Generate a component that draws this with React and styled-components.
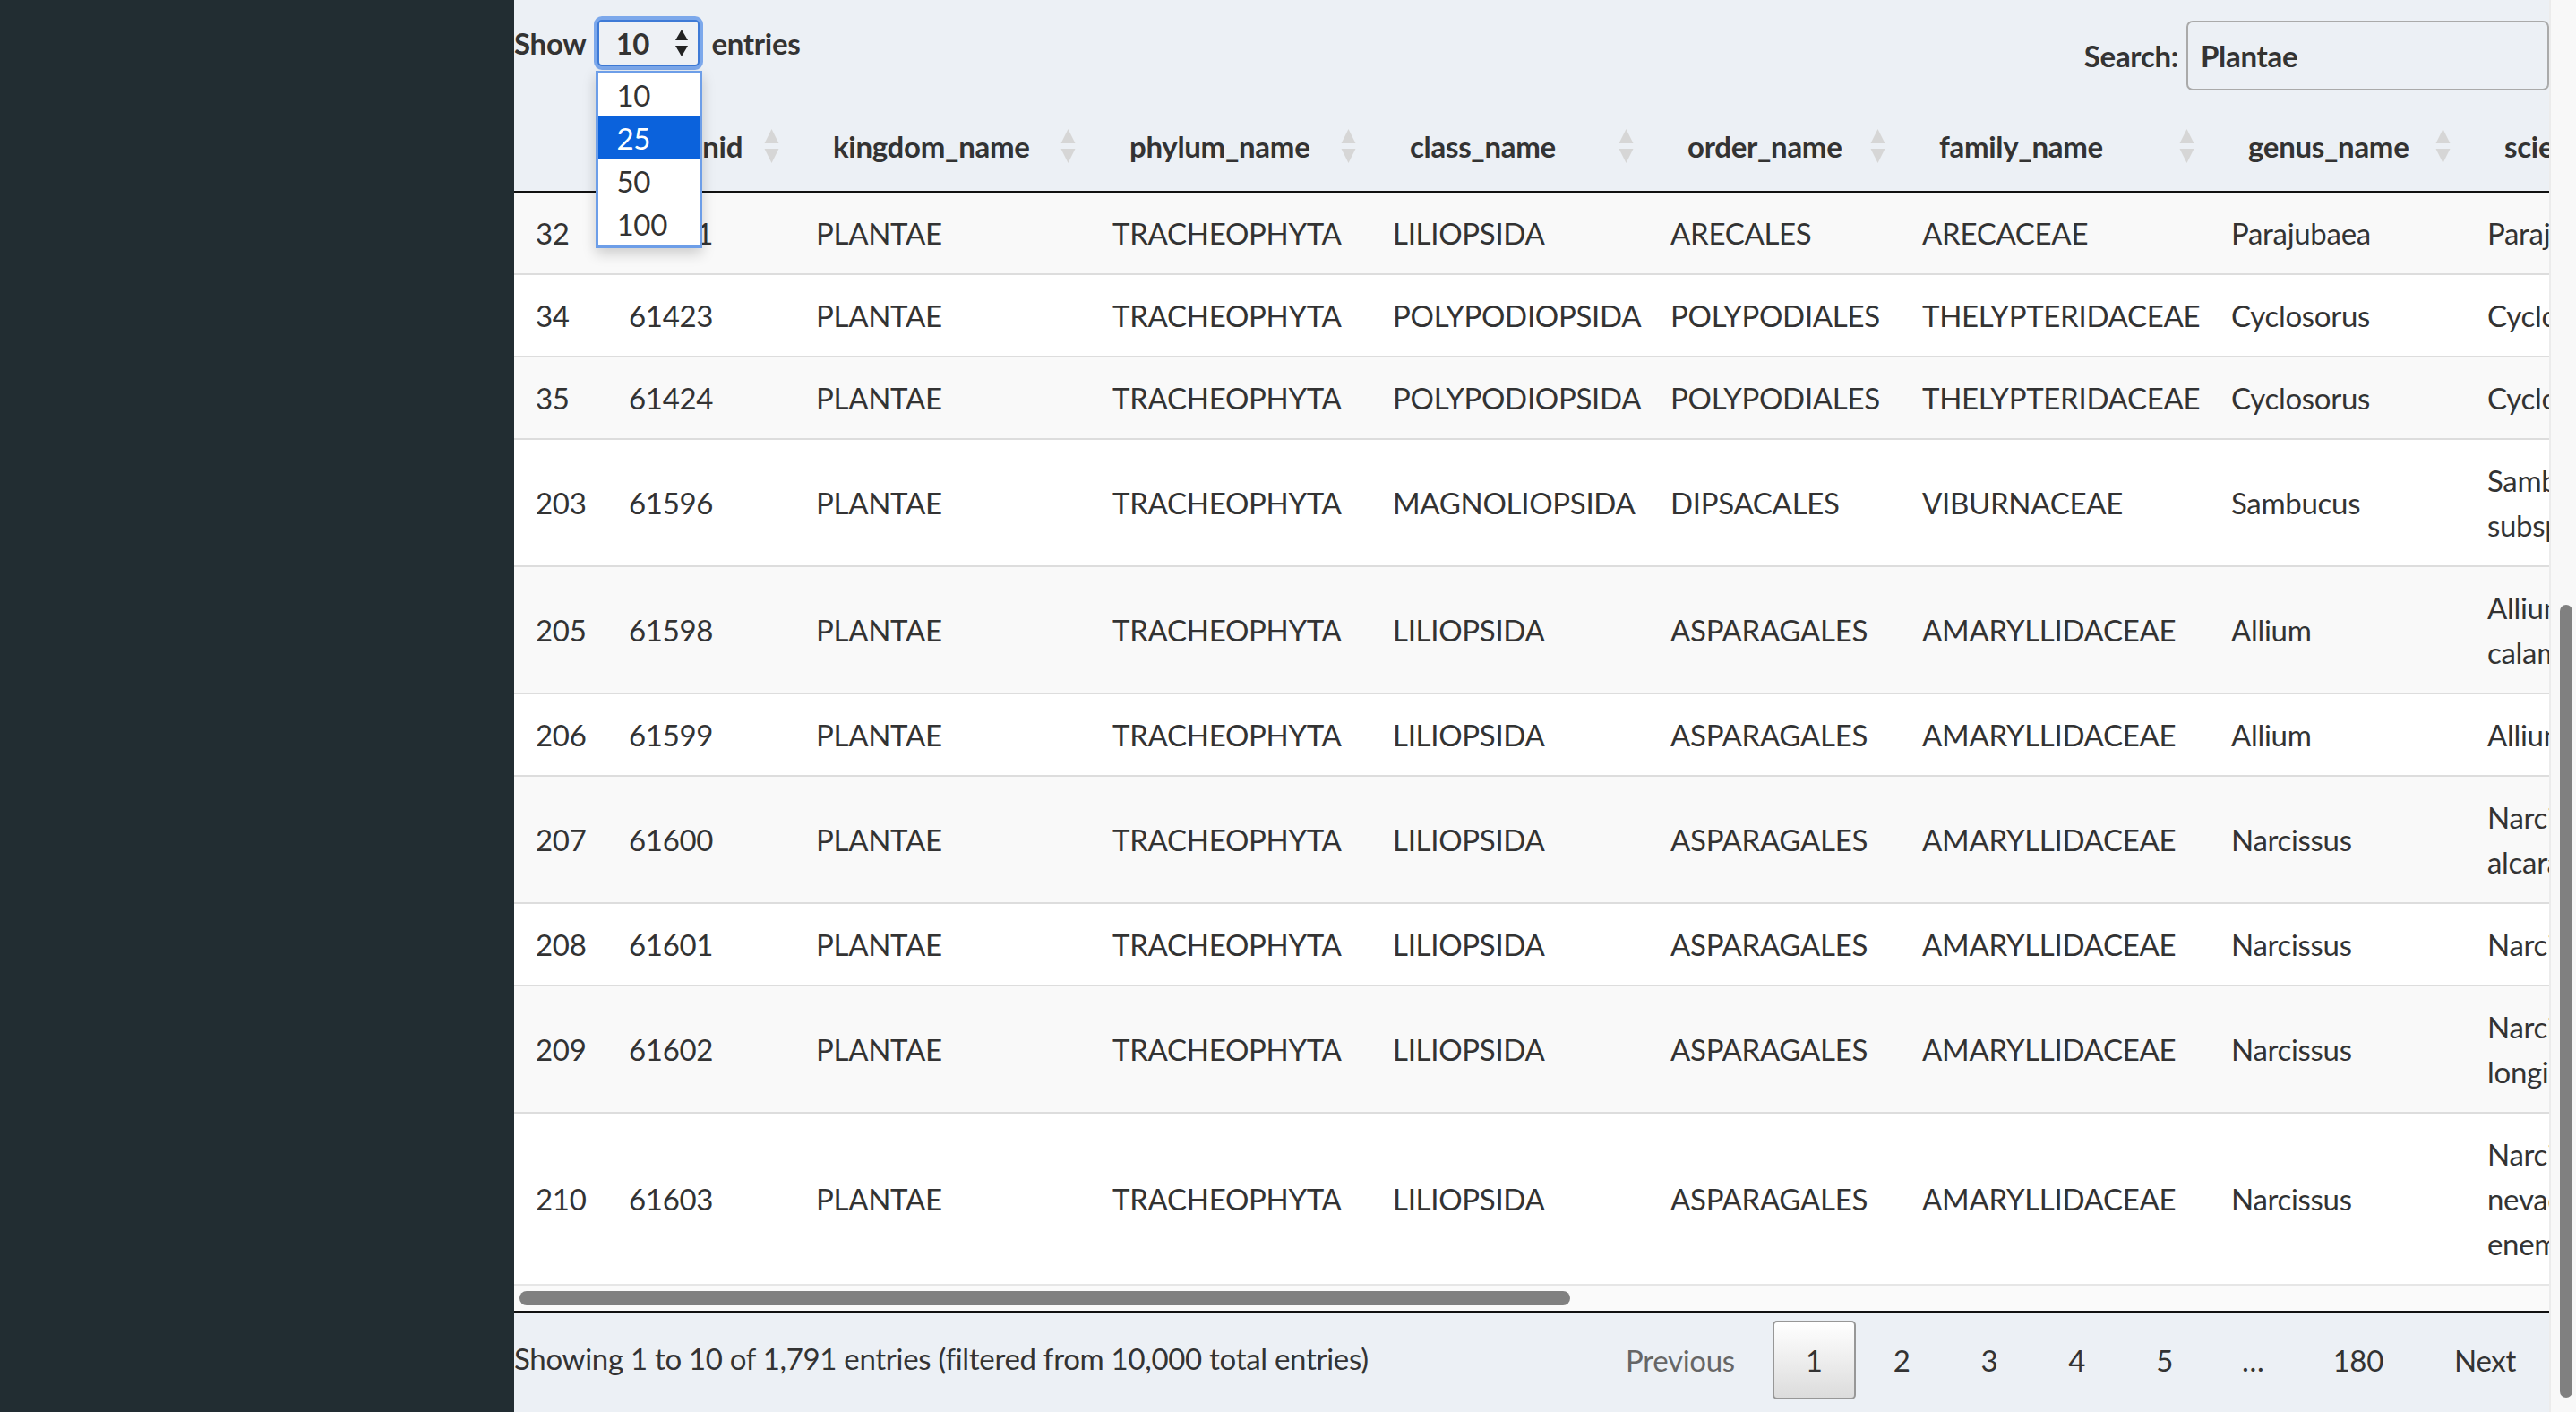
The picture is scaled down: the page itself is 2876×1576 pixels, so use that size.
import styled, { createGlobalStyle } from "styled-components";

const GlobalStyle = createGlobalStyle`
  html, body {
    margin: 0;
    padding: 0;
    height: 100%;
    overflow: hidden;
  }
  body {
    font-family: Lato, "Open Sans", sans-serif;
    color: #333;
    background: #ecf0f5;
  }
  #root {
    height: 100%;
  }
`;

const columns = [
  { key: "row", title: "", width: 104, sortable: false },
  { key: "taxonid", title: "taxonid", width: 209 },
  { key: "kingdom", title: "kingdom_name", width: 331 },
  { key: "phylum", title: "phylum_name", width: 313 },
  { key: "klass", title: "class_name", width: 310 },
  { key: "order", title: "order_name", width: 281 },
  { key: "family", title: "family_name", width: 345 },
  { key: "genus", title: "genus_name", width: 286 },
  { key: "scientific", title: "scientific_name", width: 316, wrap: true },
];

const rows = [
  ["32", "61421", "PLANTAE", "TRACHEOPHYTA", "LILIOPSIDA", "ARECALES", "ARECACEAE", "Parajubaea", "Parajubaea sunkha"],
  ["34", "61423", "PLANTAE", "TRACHEOPHYTA", "POLYPODIOPSIDA", "POLYPODIALES", "THELYPTERIDACEAE", "Cyclosorus", "Cyclosorus pozoi"],
  ["35", "61424", "PLANTAE", "TRACHEOPHYTA", "POLYPODIOPSIDA", "POLYPODIALES", "THELYPTERIDACEAE", "Cyclosorus", "Cyclosorus striatus"],
  ["203", "61596", "PLANTAE", "TRACHEOPHYTA", "MAGNOLIOPSIDA", "DIPSACALES", "VIBURNACEAE", "Sambucus", "Sambucus nigra subsp. palmensis"],
  ["205", "61598", "PLANTAE", "TRACHEOPHYTA", "LILIOPSIDA", "ASPARAGALES", "AMARYLLIDACEAE", "Allium", "Allium calamarophilon"],
  ["206", "61599", "PLANTAE", "TRACHEOPHYTA", "LILIOPSIDA", "ASPARAGALES", "AMARYLLIDACEAE", "Allium", "Allium rouyi"],
  ["207", "61600", "PLANTAE", "TRACHEOPHYTA", "LILIOPSIDA", "ASPARAGALES", "AMARYLLIDACEAE", "Narcissus", "Narcissus alcaracensis"],
  ["208", "61601", "PLANTAE", "TRACHEOPHYTA", "LILIOPSIDA", "ASPARAGALES", "AMARYLLIDACEAE", "Narcissus", "Narcissus bugei"],
  ["209", "61602", "PLANTAE", "TRACHEOPHYTA", "LILIOPSIDA", "ASPARAGALES", "AMARYLLIDACEAE", "Narcissus", "Narcissus longispathus"],
  ["210", "61603", "PLANTAE", "TRACHEOPHYTA", "LILIOPSIDA", "ASPARAGALES", "AMARYLLIDACEAE", "Narcissus", "Narcissus nevadensis subsp. enemeritoi"],
];

const pages = ["1", "2", "3", "4", "5", "…", "180"];

const Page = styled.div`
  display: flex;
  width: 2876px;
  height: 1576px;
`;

const Sidebar = styled.aside`
  width: 574px;
  flex-shrink: 0;
  background: #222d32;
`;

const Content = styled.main`
  flex: 1;
  min-width: 0;
  display: flex;
  flex-direction: column;
  background: #ecf0f5;
  font-size: 33px;
  letter-spacing: -0.3px;
`;

const PageScroll = styled.div`
  width: 30px;
  flex-shrink: 0;
  box-sizing: border-box;
  display: flex;
  flex-direction: column;
  padding: 675px 4px 16px 10px;
  background: #f8f8f8;
  border-left: 2px solid #ececec;
`;

const ScrollThumb = styled.div`
  flex: 1;
  background: #808080;
  border-radius: 8px;
`;

/* top controls */
const Controls = styled.div`
  display: flex;
  justify-content: space-between;
  align-items: flex-start;
  height: 113px;
  flex-shrink: 0;
`;

const LengthLabel = styled.div`
  display: flex;
  align-items: center;
  gap: 13px;
  margin-top: 22px;
  font-weight: 700;
  line-height: 52px;
`;

const SelectBox = styled.div`
  position: relative;
  width: 114px;
  height: 52px;
  box-sizing: border-box;
  display: flex;
  align-items: center;
  justify-content: space-between;
  padding: 0 10px 0 18px;
  border: 2px solid #3e7ad6;
  border-radius: 5px;
  box-shadow: 0 0 0 4px rgba(96, 150, 232, 0.8);
  background: #eef1f5;
  font-weight: 700;
`;

const OptionList = styled.ul`
  position: absolute;
  top: 55px;
  left: -4px;
  width: 119px;
  margin: 0;
  padding: 0;
  list-style: none;
  box-sizing: border-box;
  background: #fff;
  border: 3px solid #6d9ee8;
  box-shadow: 0 6px 14px rgba(0, 0, 0, 0.18);
  z-index: 5;
`;

const Option = styled.li`
  height: 48px;
  line-height: 48px;
  padding-left: 20px;
  font-weight: 400;
  background: ${(p) => (p.$active ? "#0b62dc" : "#fff")};
  color: ${(p) => (p.$active ? "#fff" : "#333")};
`;

const SearchLabel = styled.label`
  display: flex;
  align-items: center;
  gap: 9px;
  margin-top: 23px;
  font-weight: 700;
`;

const SearchInput = styled.input`
  width: 405px;
  height: 78px;
  box-sizing: border-box;
  padding: 0 14px;
  border: 2px solid #aaa;
  border-radius: 7px;
  background: transparent;
  font-family: inherit;
  font-size: 33px;
  font-weight: 700;
  letter-spacing: -0.3px;
  color: #333;
  outline: none;
`;

/* table */
const TableWrap = styled.div`
  overflow: hidden;
  flex-shrink: 0;
`;

const Table = styled.table`
  width: ${columns.reduce((s, c) => s + c.width, 0)}px;
  table-layout: fixed;
  border-collapse: collapse;
`;

const Col = styled.col`
  width: ${(p) => p.$w}px;
`;

const Th = styled.th`
  padding: 25px 17px 25px 43px;
  text-align: left;
  font-weight: 700;
  line-height: 50px;
  white-space: nowrap;
  border-bottom: 2px solid #111;
`;

const ThInner = styled.div`
  display: flex;
  align-items: center;
  justify-content: space-between;
  gap: 8px;
`;

const Tr = styled.tr`
  background: #fff;
  &:nth-child(odd) {
    background: #f9f9f9;
  }
  &:first-child td {
    border-top: none;
  }
`;

const Td = styled.td`
  padding: 20px 24px;
  line-height: 50px;
  border-top: 2px solid #ddd;
  white-space: ${(p) => (p.$wrap ? "normal" : "nowrap")};
  vertical-align: middle;
`;

const HScroll = styled.div`
  flex-shrink: 0;
  height: 22px;
  padding: 6px 0 0 6px;
  border-top: 2px solid #e6e6e6;
  border-bottom: 2px solid #111;
  background: #fafafa;
`;

const HThumb = styled.div`
  width: 1173px;
  height: 16px;
  border-radius: 8px;
  background: #808080;
`;

/* footer */
const Footer = styled.div`
  display: flex;
  justify-content: space-between;
  align-items: flex-start;
`;

const Info = styled.div`
  padding-top: 26px;
  line-height: 50px;
`;

const Paginate = styled.div`
  display: flex;
  align-items: center;
  gap: 5px;
  padding-top: 9px;
`;

const PageButton = styled.span`
  padding: 17px 35px;
  line-height: 50px;
  border: 2px solid ${(p) => (p.$current ? "#979797" : "transparent")};
  border-radius: 5px;
  color: ${(p) => (p.$disabled ? "#666" : "#333")};
  background: ${(p) =>
    p.$current ? "linear-gradient(to bottom, #ffffff 0%, #dcdcdc 100%)" : "transparent"};
`;

const Ellipsis = styled.span`
  padding: 0 35px;
  line-height: 50px;
`;

const SortIcon = () => (
  <svg width="17" height="38" viewBox="0 0 17 38">
    <path d="M8.5 0 L16.5 16 L0.5 16 Z" fill="#d6d6d6" />
    <path d="M0.5 22 L16.5 22 L8.5 38 Z" fill="#d6d6d6" />
  </svg>
);

const SelectArrows = () => (
  <svg width="16" height="32" viewBox="0 0 16 32">
    <path d="M8 1 L15 13 L1 13 Z" fill="#222" />
    <path d="M1 19 L15 19 L8 31 Z" fill="#222" />
  </svg>
);

export default function App() {
  return (
    <>
      <GlobalStyle />
      <Page>
        <Sidebar />
        <Content>
          <Controls>
            <LengthLabel>
              Show
              <SelectBox>
                10
                <SelectArrows />
                <OptionList>
                  {["10", "25", "50", "100"].map((o) => (
                    <Option key={o} $active={o === "25"}>
                      {o}
                    </Option>
                  ))}
                </OptionList>
              </SelectBox>
              entries
            </LengthLabel>
            <SearchLabel>
              Search:
              <SearchInput type="search" value="Plantae" readOnly />
            </SearchLabel>
          </Controls>

          <TableWrap>
            <Table>
              <colgroup>
                {columns.map((c) => (
                  <Col key={c.key} $w={c.width} />
                ))}
              </colgroup>
              <thead>
                <tr>
                  {columns.map((c) => (
                    <Th key={c.key}>
                      <ThInner>
                        <span>{c.title}</span>
                        {c.sortable !== false && <SortIcon />}
                      </ThInner>
                    </Th>
                  ))}
                </tr>
              </thead>
              <tbody>
                {rows.map((r) => (
                  <Tr key={r[0]}>
                    {r.map((cell, i) => (
                      <Td key={i} $wrap={columns[i].wrap}>
                        {cell}
                      </Td>
                    ))}
                  </Tr>
                ))}
              </tbody>
            </Table>
          </TableWrap>
          <HScroll>
            <HThumb />
          </HScroll>

          <Footer>
            <Info>Showing 1 to 10 of 1,791 entries (filtered from 10,000 total entries)</Info>
            <Paginate>
              <PageButton $disabled>Previous</PageButton>
              {pages.map((p) =>
                p === "…" ? (
                  <Ellipsis key={p}>…</Ellipsis>
                ) : (
                  <PageButton key={p} $current={p === "1"}>
                    {p}
                  </PageButton>
                )
              )}
              <PageButton>Next</PageButton>
            </Paginate>
          </Footer>
        </Content>
        <PageScroll>
          <ScrollThumb />
        </PageScroll>
      </Page>
    </>
  );
}
